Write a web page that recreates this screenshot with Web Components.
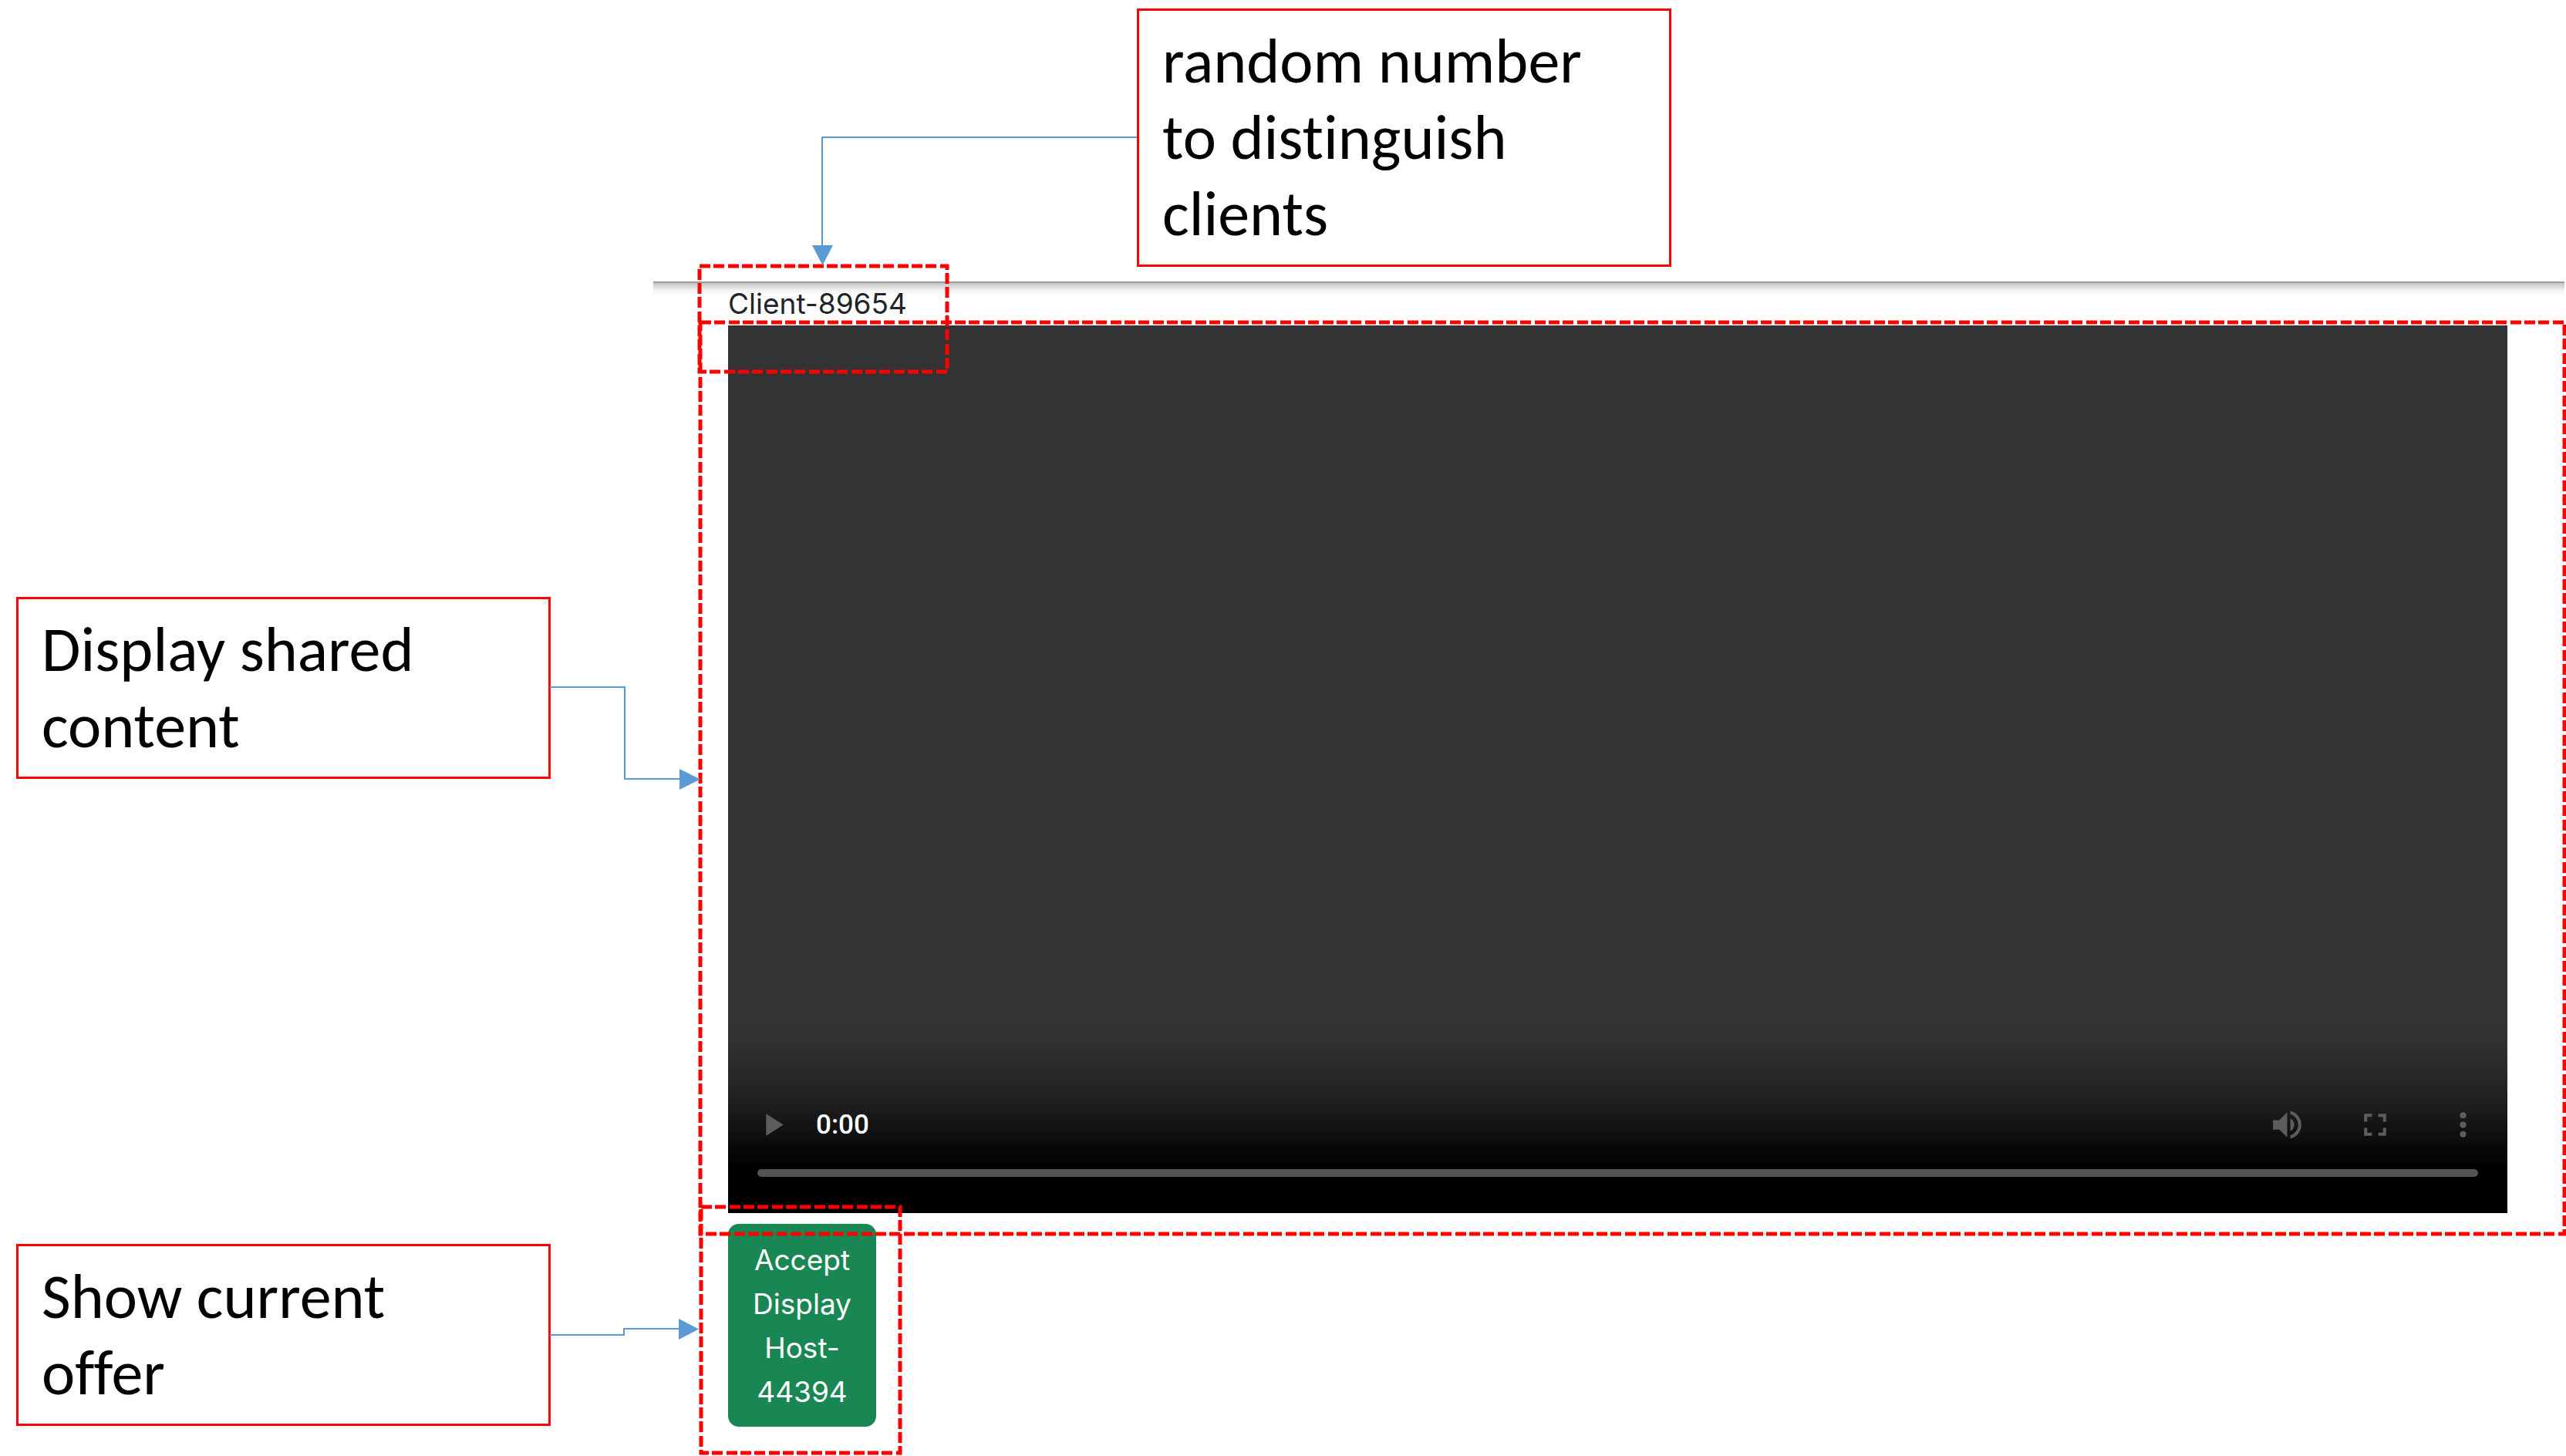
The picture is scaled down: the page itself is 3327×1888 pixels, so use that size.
<!DOCTYPE html>
<html lang="en">
<head>
<meta charset="utf-8">
<title>Client screen</title>
<style>
  body { margin: 0; background: #fff; }
</style>
</head>
<body>
<annotated-screen>
  <note-card slot="top">random number to distinguish clients</note-card>
  <note-card slot="rail">Display shared content</note-card>
  <note-card slot="rail">Show current offer</note-card>
  <client-view name="Client-89654">
    <video-player></video-player>
    <offer-button>Accept Display Host-44394</offer-button>
  </client-view>
</annotated-screen>

<script>
const define = (name, html, setup) => {
  const template = document.createElement('template');
  template.innerHTML = html;
  customElements.define(name, class extends HTMLElement {
    constructor() {
      super();
      this.attachShadow({ mode: 'open' }).append(template.content.cloneNode(true));
      if (setup) setup(this);
    }
  });
};

/* Dashed red outline laid over whatever it surrounds */
define('highlight-frame', `
  <style>
    :host { display: block; position: absolute; z-index: 1; pointer-events: none; }
    svg { display: block; width: 100%; height: 100%; overflow: visible; }
    rect { fill: none; stroke: #f00; stroke-width: 5; stroke-dasharray: 14 4 14 5 14 4; }
  </style>
  <svg aria-hidden="true"><rect width="100%" height="100%"/></svg>`);

define('note-card', `
  <style>
    :host {
      display: block; box-sizing: border-box; width: 693px; padding: 16px 30px;
      border: 3px solid #f00; background: #fff; color: #000;
      font: 82px/99px Carlito, Calibri, Lato, sans-serif;
      font-variant-ligatures: none;
    }
    p { margin: 0; max-width: 600px; }
  </style>
  <p><slot></slot></p>`);

define('video-player', `
  <style>
    :host {
      display: flex; flex-direction: column; justify-content: flex-end;
      box-sizing: border-box; aspect-ratio: 2307 / 1151; padding: 0 38px 47px;
      background: linear-gradient(to top, #000 0, #000 60px, #0b0b0b 90px, #1a1a1a 130px, #262626 170px, #303030 220px, #333 250px) #333;
      color: #fff; font: 500 35px/40px Roboto, sans-serif;
    }
    .controls { display: flex; align-items: center; margin-bottom: 33px; padding: 0 0 0 2px; }
    .time { margin-left: 32px; flex: 1; }
    .actions { display: flex; gap: 65px; margin-right: -5px; }
    button { display: block; padding: 0; border: 0; background: none; color: #5d5d5d; }
    .play { margin-left: -7px; }
    svg { display: block; width: 49px; height: 49px; fill: currentColor; }
    input { display: block; appearance: none; width: 100%; height: 10px; margin: 0; border-radius: 5px; background: #535353; }
    input::-webkit-slider-thumb { appearance: none; width: 0; height: 0; }
  </style>
  <div class="controls">
    <button class="play" aria-label="Play"><svg viewBox="0 0 24 24"><path d="M8 5v14l11-7z"/></svg></button>
    <span class="time">0:00</span>
    <div class="actions">
      <button aria-label="Mute"><svg viewBox="0 0 24 24"><path d="M3 9v6h4l5 5V4L7 9H3zm13.500 3c0-1.770-1.020-3.290-2.500-4.030v8.050c1.480-.730 2.500-2.250 2.500-4.020zM14 3.230v2.060c2.890.860 5 3.540 5 6.710s-2.110 5.850-5 6.710v2.060c4.010-.910 7-4.490 7-8.770s-2.990-7.860-7-8.770z"/></svg></button>
      <button aria-label="Full screen"><svg viewBox="0 0 24 24"><path d="M7 14H5v5h5v-2H7v-3zm-2-4h2V7h3V5H5v5zm12 7h-3v2h5v-5h-2v3zM14 5v2h3v3h2V5h-5z"/></svg></button>
      <button aria-label="More options"><svg viewBox="0 0 24 24"><circle cx="12" cy="6" r="2"/><circle cx="12" cy="12" r="2"/><circle cx="12" cy="18" r="2"/></svg></button>
    </div>
  </div>
  <input type="range" min="0" max="100" value="0" aria-label="Seek">`);

define('offer-button', `
  <style>
    :host { display: block; position: relative; width: 192px; margin-top: 14px; }
    button {
      display: block; width: 100%; padding: 18px 28px 17px; border: 0; border-radius: 14px;
      background: #198754; color: #fff; font: 37px/57px Inter, sans-serif; text-align: center;
    }
    highlight-frame { inset: -22px -31px -34px -35px; }
  </style>
  <button><slot></slot></button>
  <highlight-frame></highlight-frame>`);

define('client-view', `
  <style>
    :host { display: block; position: relative; padding: 0 76px 38px 97px; color: #212529; font: 37px/57px Inter, sans-serif; }
    .edge { position: absolute; top: 0; left: 0; right: 2px; height: 18px;
      background: linear-gradient(#9b9b9b 0, #9b9b9b 2px, #c4c4c4 2px, #dcdcdc 7px, #f4f4f4 12px, #fff 18px); }
    .name { position: relative; width: max-content; }
    .name highlight-frame { top: -20px; left: -37px; width: 321px; height: 137px; }
    .shared { position: relative; }
    .shared highlight-frame { inset: -4px -74px -27px -36px; }
  </style>
  <div class="edge"></div>
  <div class="name"><span></span><highlight-frame></highlight-frame></div>
  <div class="shared"><slot name="media"></slot><highlight-frame></highlight-frame></div>
  <slot></slot>`, host => {
  host.shadowRoot.querySelector('.name span').textContent = host.getAttribute('name');
  const player = host.querySelector('video-player');
  if (player) player.slot = 'media';
});

define('annotated-screen', `
  <style>
    :host { display: grid; position: relative; grid-template: 365px auto / 847px 1fr; }
    .top { grid-area: 1 / 2; padding: 11px 0 0 627px; }
    .rail { grid-area: 1 / 1 / 3 / 2; display: flex; flex-direction: column; gap: 603px; padding: 774px 0 0 21px; }
    .main { grid-area: 2 / 2; min-width: 0; }
    .links { position: absolute; top: 0; left: 0; width: 100%; height: 100%; z-index: 1; pointer-events: none; }
    .links path { fill: none; stroke: #5b9bd5; stroke-width: 2; }
    .links polygon { fill: #5b9bd5; }
  </style>
  <div class="rail"><slot name="rail"></slot></div>
  <div class="top"><slot name="top"></slot></div>
  <div class="main"><slot></slot></div>
  <svg class="links" aria-hidden="true">
    <path d="M1474 178H1066V320"/><polygon points="1053,318 1080,318 1066.500,344"/>
    <path d="M713 891H810V1010H882"/><polygon points="881,997 881,1024 908,1010.500"/>
    <path d="M713 1731H809V1723H881"/><polygon points="880,1710 880,1737 906,1723.500"/>
  </svg>`);
</script>
</body>
</html>
